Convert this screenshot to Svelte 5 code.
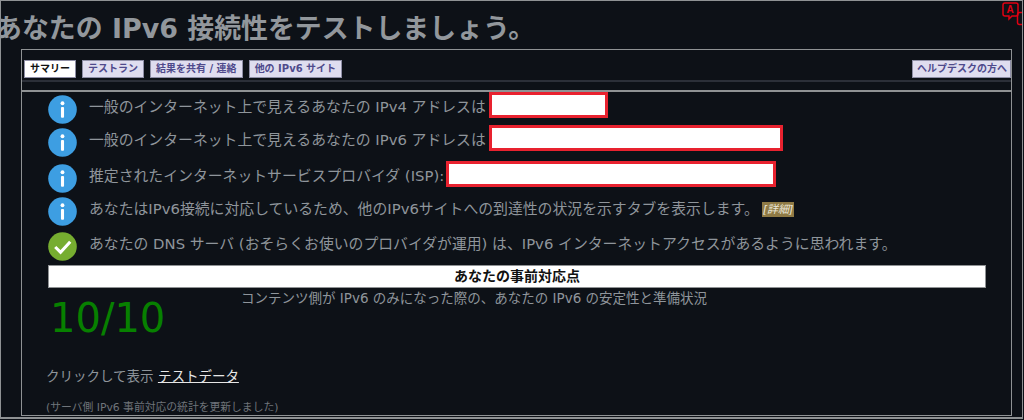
<script>
  const tabs = ['テストラン', '結果を共有 / 連絡', '他の IPv6 サイト']

  const rows = [
    { icon: 'info', text: '一般のインターネット上で見えるあなたの IPv4 アドレスは', box: 'b4', gap: 7 },
    { icon: 'info', text: '一般のインターネット上で見えるあなたの IPv6 アドレスは', box: 'b6', gap: 10 },
    { icon: 'info', text: '推定されたインターネットサービスプロバイダ (ISP):', box: 'isp', gap: 7 },
    { icon: 'info', text: 'あなたはIPv6接続に対応しているため、他のIPv6サイトへの到達性の状況を示すタブを表示します。', more: true, gap: 9 },
    { icon: 'ok', text: 'あなたの DNS サーバ (おそらくお使いのプロバイダが運用) は、IPv6 インターネットアクセスがあるように思われます。', gap: 10 }
  ]
</script>

<div class="page">
  <svg class="translate" width="22" height="25" viewBox="0 0 22 25" fill="none" stroke="#e00012" stroke-width="1.5">
    <path d="M5 2h11a2 2 0 0 1 2 2v9a2 2 0 0 1-2 2h-4l-3 3v-3H5a2 2 0 0 1-2-2V4a2 2 0 0 1 2-2z" />
    <text x="6.5" y="12" font-size="10" font-weight="700" fill="#e00012" stroke="none" font-family="'Liberation Sans', sans-serif">A</text>
    <path d="M22 11.5h-2.500a2 2 0 0 0-2 2v8a2 2 0 0 0 2 2h2.500" />
  </svg>

  <h1>あなたの IPv6 接続性をテストしましょう。</h1>

  <div class="panel">
    <nav class="tabs">
      <span class="tab active">サマリー</span>
      {#each tabs as t}
        <span class="tab">{t}</span>
      {/each}
      <span class="tab help">ヘルプデスクの方へ</span>
    </nav>

    <div class="body">
      {#each rows as r}
        <div class="row" style="margin-bottom: {r.gap}px">
          {#if r.icon === 'info'}
            <svg class="icon" width="29" height="29" viewBox="0 0 30 30">
              <circle cx="15" cy="15" r="14.8" fill="#3d9ee2" />
              <circle cx="15" cy="8.5" r="2" fill="#fff" />
              <rect x="13.4" y="12.5" width="3.2" height="11" rx="1" fill="#fff" />
            </svg>
          {:else}
            <svg class="icon" width="29" height="29" viewBox="0 0 30 30">
              <circle cx="15" cy="15" r="14.8" fill="#76ad30" />
              <path d="M7.5 15.5l5.5 5.500L23 10" fill="none" stroke="#fff" stroke-width="3.2" />
            </svg>
          {/if}
          <span class="txt">{r.text}</span>
          {#if r.box}<span class="redact {r.box}"></span>{/if}
          {#if r.more}<span class="more">[詳細]</span>{/if}
        </div>
      {/each}

      <div class="section">あなたの事前対応点</div>

      <div class="score">
        <div class="num">10/10</div>
        <div class="desc">コンテンツ側が IPv6 のみになった際の、あなたの IPv6 の安定性と準備状況</div>
      </div>

      <p class="click">クリックして表示 <span class="link">テストデータ</span></p>
      <p class="note">(サーバ側 IPv6 事前対応の統計を更新しました)</p>
    </div>
  </div>
</div>

<style>
  :global(body) {
    margin: 0;
    background: #0d1117;
  }

  .page {
    position: relative;
    box-sizing: border-box;
    width: 1023px;
    height: 419px;
    overflow: hidden;
    background: #0d1117;
    border: 1px solid #8f9294;
    border-bottom-width: 2px;
    font-family: "DejaVu Sans", "Noto Sans CJK JP", sans-serif;
    color: #8f959b;
  }

  .translate {
    position: absolute;
    top: 0;
    right: 0;
  }

  h1 {
    margin: 0 0 0 -6px;
    padding-top: 13px;
    height: 35px;
    font-size: 26.9px;
    line-height: 30px;
    font-weight: 700;
    color: #92979c;
    white-space: nowrap;
  }

  .panel {
    box-sizing: border-box;
    width: 991px;
    height: 367px;
    margin-left: 20px;
    border: 1px solid #8f9294;
    padding-top: 10px;
  }

  .tabs {
    display: flex;
    gap: 6px;
    height: 20px;
    padding-left: 2px;
    border-bottom: 2px solid #2b2f38;
  }

  .tab {
    box-sizing: border-box;
    height: 18px;
    padding: 0 5px;
    background: #dfddef;
    border: 1px solid #8f8fa6;
    color: #4f4a8c;
    font-size: 10px;
    font-weight: 700;
    line-height: 16px;
    white-space: nowrap;
  }

  .tab.active {
    background: #fff;
    color: #111;
  }

  .tab.help {
    margin-left: auto;
    padding: 0 3px 0 4px;
  }

  .body {
    margin-top: 8px;
    border-top: 2px solid #8f9294;
    padding-left: 26px;
  }

  .row {
    display: flex;
    align-items: center;
    height: 26px;
    white-space: nowrap;
  }

  .icon {
    flex: none;
    margin: 8px 12px 0 0;
  }

  .txt {
    font-size: 14.85px;
  }

  .redact {
    box-sizing: border-box;
    height: 26px;
    margin-left: 3px;
    background: #fff;
    border: 3px solid #e8222f;
  }

  .b4 { width: 119px; }
  .b6 { width: 294px; }
  .isp { width: 330px; margin-left: 2px; }

  .more {
    margin: 4px 0 0 3px;
    padding: 0 1px;
    background: #8f7a45;
    color: #e9e6d8;
    font-size: 11px;
    line-height: 15px;
    font-style: italic;
  }

  .section {
    box-sizing: border-box;
    width: 938px;
    height: 23px;
    background: #fff;
    border: 1px solid #8f9294;
    color: #111;
    font-size: 14px;
    font-weight: 700;
    line-height: 21px;
    text-align: center;
  }

  .score {
    display: flex;
    height: 78px;
  }

  .num {
    width: 193px;
    padding: 5px 0 0 2px;
    box-sizing: border-box;
    font-size: 40px;
    line-height: 50px;
    color: #078000;
  }

  .desc {
    font-size: 13.5px;
    line-height: 20px;
  }

  .click {
    margin: 0 0 0 -2px;
    font-size: 13.5px;
    line-height: 20px;
  }

  .link {
    color: #e6e6e6;
    text-decoration: underline;
  }

  .note {
    margin: 14px 0 0 -2px;
    font-size: 10.8px;
    line-height: 16px;
    color: #6f747a;
  }
</style>
